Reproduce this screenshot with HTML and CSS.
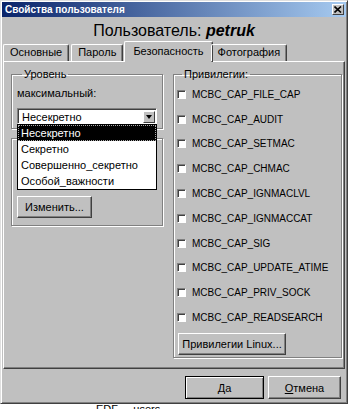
FILE: index.html
```html
<!DOCTYPE html>
<html lang="ru">
<head>
    <meta charset="UTF-8">
    <title>Свойства пользователя</title>
    <link rel="stylesheet" href="styles.css">
</head>
<body>
    <div class="window">
        <div class="titlebar">
            <span class="title">Свойства пользователя</span>
            <span class="close">
                <svg width="8" height="7" viewBox="0 0 8 7"><path d="M0.5 0.5 L7 6.5 M7 0.5 L0.5 6.5" stroke="#000" stroke-width="1.6"/></svg>
            </span>
        </div>
        <div class="heading">Пользователь: <b><i>petruk</i></b></div>
        <div class="tabs">
            <div class="tab">Основные</div>
            <div class="tab">Пароль</div>
            <div class="tab active">Безопасность</div>
            <div class="tab">Фотография</div>
        </div>
        <div class="panel">
            <div class="left-col">
                <fieldset class="group level">
                    <legend>Уровень</legend>
                    <div class="label">максимальный:</div>
                    <div class="select">
                        <span>Несекретно</span>
                        <span class="arrow"></span>
                        <!-- раскрытый список -->
                        <div class="dropdown">
                            <div class="item selected">Несекретно</div>
                            <div class="item">Секретно</div>
                            <div class="item">Совершенно_секретно</div>
                            <div class="item">Особой_важности</div>
                        </div>
                    </div>
                </fieldset>
                <fieldset class="group change">
                    <div class="btn">Изменить...</div>
                </fieldset>
            </div>
            <fieldset class="group privs">
                <legend>Привилегии:</legend>
                <div class="check"><span class="box"></span>MCBC_CAP_FILE_CAP</div>
                <div class="check"><span class="box"></span>MCBC_CAP_AUDIT</div>
                <div class="check"><span class="box"></span>MCBC_CAP_SETMAC</div>
                <div class="check"><span class="box"></span>MCBC_CAP_CHMAC</div>
                <div class="check"><span class="box"></span>MCBC_CAP_IGNMACLVL</div>
                <div class="check"><span class="box"></span>MCBC_CAP_IGNMACCAT</div>
                <div class="check"><span class="box"></span>MCBC_CAP_SIG</div>
                <div class="check"><span class="box"></span>MCBC_CAP_UPDATE_ATIME</div>
                <div class="check"><span class="box"></span>MCBC_CAP_PRIV_SOCK</div>
                <div class="check"><span class="box"></span>MCBC_CAP_READSEARCH</div>
                <div class="btn linux">Привилегии Linux...</div>
            </fieldset>
        </div>
        <div class="buttons">
            <div class="btn default"><u>Д</u>а</div>
            <div class="btn cancel"><u>О</u>тмена</div>
        </div>
    </div>
    <div class="below">EDF&nbsp;&nbsp;&nbsp;&nbsp;&nbsp;users</div>
</body>
</html>
```

FILE: styles.css
```css
* {
    box-sizing: border-box;
}
body {
    margin: 0;
    background: #fff;
    font-family: "Liberation Sans", Arial, sans-serif;
    font-size: 11px;
    color: #000;
}
.window {
    width: 348px;
    height: 404px;
    background: #c0c0c0;
    border: 1px solid;
    border-color: #dfdfdf #404040 #404040 #dfdfdf;
    box-shadow: inset 1px 1px 0 #fff, inset -1px -1px 0 #808080;
    padding: 1px;
    display: flex;
    flex-direction: column;
}
.titlebar {
    height: 15px;
    background: linear-gradient(to right, #0a246a, #a6caf0);
    display: flex;
    align-items: center;
    justify-content: space-between;
    padding: 0 2px 0 3px;
}
.title {
    color: #fff;
    font-weight: bold;
    font-size: 10px;
}
.close {
    width: 12px;
    height: 11px;
    background: #c0c0c0;
    border: 1px solid;
    border-color: #fff #404040 #404040 #fff;
    display: flex;
    align-items: center;
    justify-content: center;
}
.heading {
    height: 24px;
    padding-top: 4px;
    line-height: 20px;
    font-size: 16px;
    text-align: center;
}
.tabs {
    height: 20px;
    display: flex;
    align-items: flex-end;
    padding-left: 1px;
    position: relative;
    z-index: 1;
}
.tab {
    height: 17px;
    line-height: 15px;
    padding: 0 6px;
    margin-right: 2px;
    border: 1px solid;
    border-bottom: none;
    border-color: #fff #404040 #404040 #fff;
    border-radius: 2px 2px 0 0;
    box-shadow: inset -1px 0 0 #808080;
}
.tab.active {
    height: 21px;
    margin: 0 0 -1px -1px;
    padding: 0 8px;
    line-height: 19px;
    background: #c0c0c0;
}
.tab.active + .tab {
    margin-left: -2px;
}
.panel {
    height: 308px;
    margin: 0 1px;
    border: 1px solid;
    border-color: #fff #404040 #404040 #fff;
    box-shadow: inset -1px -1px 0 #808080;
    padding: 6px 2px 0 7px;
    display: flex;
    gap: 10px;
}
.left-col {
    width: 152px;
    display: flex;
    flex-direction: column;
    gap: 9px;
}
.group {
    margin: 0;
    border: 1px solid #808080;
    box-shadow: 1px 1px 0 #fff, inset 1px 1px 0 #fff;
    padding: 0;
    min-width: 0;
}
.group legend {
    padding: 0 2px;
    margin-left: 5px;
    line-height: 13px;
}
.level {
    padding: 6px 5px 4px 5px;
}
.label {
    line-height: 13px;
}
.select {
    margin-top: 8px;
    height: 16px;
    background: #fff;
    border: 1px solid;
    border-color: #808080 #fff #fff #808080;
    box-shadow: inset 1px 1px 0 #404040;
    display: flex;
    align-items: center;
    justify-content: space-between;
    padding: 1px 1px 0 4px;
    position: relative;
}
.arrow {
    width: 12px;
    height: 12px;
    background: #c0c0c0;
    border: 1px solid;
    border-color: #fff #404040 #404040 #fff;
    position: relative;
}
.arrow::after {
    content: "";
    position: absolute;
    left: 2px;
    top: 3px;
    border: 3px solid transparent;
    border-top: 4px solid #000;
    border-bottom: none;
}
.dropdown {
    position: absolute;
    top: 15px;
    left: -1px;
    width: 140px;
    background: #fff;
    border: 1px solid #000;
    z-index: 5;
}
.item {
    height: 16px;
    line-height: 16px;
    padding-left: 3px;
}
.item.selected {
    background: #000;
    color: #fff;
    outline: 1px dotted #aaa;
    outline-offset: -1px;
}
.change {
    height: 88px;
    padding: 57px 5px 0 5px;
}
.btn {
    height: 22px;
    background: #c0c0c0;
    border: 1px solid;
    border-color: #fff #404040 #404040 #fff;
    box-shadow: inset -1px -1px 0 #808080;
    display: flex;
    align-items: center;
    justify-content: center;
}
.change .btn {
    width: 75px;
}
.privs {
    width: 169px;
    height: 290px;
    padding: 1px 3px 0 3px;
}
.check {
    height: 24.8px;
    display: flex;
    align-items: center;
    font-size: 10px;
}
.box {
    width: 9px;
    height: 9px;
    margin-right: 6px;
    background: #fff;
    border: 1px solid;
    border-color: #808080 #fff #fff #808080;
    box-shadow: inset 1px 1px 0 #404040;
}
.btn.linux {
    width: 108px;
    margin: 3px 0 0 1px;
}
.buttons {
    flex: 1;
    display: flex;
    justify-content: flex-end;
    align-items: flex-start;
    gap: 4px;
    padding: 7px 5px 0 0;
}
.buttons .btn {
    height: 23px;
}
.btn.default {
    width: 79px;
    border: 1px solid #000;
    box-shadow: inset 1px 1px 0 #fff, inset -1px -1px 0 #808080;
}
.btn.cancel {
    width: 73px;
}
.below {
    margin-left: 96px;
    line-height: 10px;
    font-size: 11px;
}
```
